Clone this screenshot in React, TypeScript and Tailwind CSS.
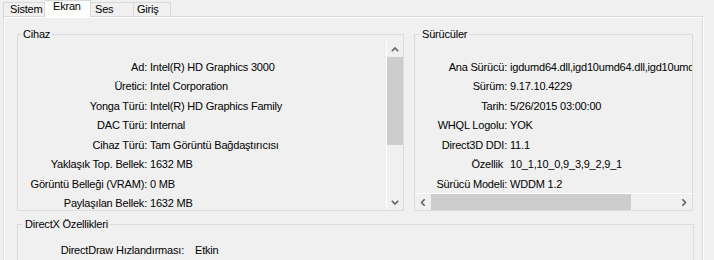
import type { ReactNode } from "react";

const cihaz: [string, string][] = [
  ["Ad:", "Intel(R) HD Graphics 3000"],
  ["Üretici:", "Intel Corporation"],
  ["Yonga Türü:", "Intel(R) HD Graphics Family"],
  ["DAC Türü:", "Internal"],
  ["Cihaz Türü:", "Tam Görüntü Bağdaştırıcısı"],
  ["Yaklaşık Top. Bellek:", "1632 MB"],
  ["Görüntü Belleği (VRAM):", "0 MB"],
  ["Paylaşılan Bellek:", "1632 MB"],
];

const suruculer: [string, string][] = [
  ["Ana Sürücü:", "igdumd64.dll,igd10umd64.dll,igd10umd64.dll"],
  ["Sürüm:", "9.17.10.4229"],
  ["Tarih:", "5/26/2015 03:00:00"],
  ["WHQL Logolu:", "YOK"],
  ["Direct3D DDI:", "11.1"],
  ["Özellik", "10_1,10_0,9_3,9_2,9_1"],
  ["Sürücü Modeli:", "WDDM 1.2"],
];

export default function App() {
  return (
    <div className="h-[260px] w-[714px] overflow-hidden bg-[#f0f0f0] font-['Liberation_Sans',Arial,sans-serif] text-[11px] tracking-[-0.2px] text-black">
      {/* tab strip */}
      <div className="flex h-[16px] items-end pl-[3px]">
        <div className="h-[14px] w-[42px] border-x border-t border-[#d9d9d9] pl-[6px] leading-[12px]">Sistem</div>
        <div className="relative z-10 -mb-px h-[17px] w-[46px] border-r border-t border-[#d9d9d9] bg-white pl-[8px] leading-[11px]">
          Ekran
        </div>
        <div className="h-[14px] w-[43px] border-r border-t border-[#d9d9d9] pl-[4px] leading-[12px]">Ses</div>
        <div className="h-[14px] w-[37px] border-r border-t border-[#d9d9d9] pl-[3px] leading-[12px]">Giriş</div>
      </div>

      {/* tab page */}
      <div className="ml-[3px] h-[244px] w-[701px] border-l border-r border-t border-l-[#d9d9d9] border-r-white border-t-[#d9d9d9] pl-[13px] pt-[17px] shadow-[inset_1px_1px_0_#fff,inset_-1px_0_0_#d9d9d9]">
        <div className="flex gap-[10px]">
          <GroupBox title="Cihaz" className="h-[177px] w-[387px]" legendClass="ml-[3px]">
            <div className="flex min-h-0 flex-1">
              <div className="flex-1 overflow-hidden pt-[17px]">
                {cihaz.map(([k, v]) => (
                  <Row key={k} label={k} value={v} labelClass="w-[129px]" />
                ))}
              </div>
              <div className="flex w-[17px] flex-col border-l border-white">
                <ArrowButton dir="up" />
                <div className="h-[88px] bg-[#cdcdcd]" />
                <div className="flex-1" />
                <ArrowButton dir="down" />
              </div>
            </div>
          </GroupBox>

          <GroupBox title="Sürücüler" className="h-[177px] w-[279px]" legendClass="ml-[5px]">
            <div className="flex min-h-0 flex-1 flex-col">
              <div className="min-h-0 flex-1 overflow-hidden pt-[17px]">
                {suruculer.map(([k, v]) => (
                  <Row key={k} label={k} value={v} labelClass={k.endsWith(":") ? "w-[92px]" : "w-[92px] pr-[4px]"} />
                ))}
              </div>
              <div className="flex h-[17px] border-t border-white">
                <ArrowButton dir="left" />
                <div className="w-[200px] bg-[#cdcdcd]" />
                <div className="flex-1" />
                <ArrowButton dir="right" />
              </div>
            </div>
          </GroupBox>
        </div>

        <GroupBox title="DirectX Özellikleri" className="mt-[13px] h-[60px] w-[677px]" legendClass="ml-[5px]">
          <div className="pt-[10px]">
            <Row label="DirectDraw Hızlandırması:" value="Etkin" labelClass="w-[166px]" valueClass="pl-[11px]" />
          </div>
        </GroupBox>
      </div>
    </div>
  );
}

function GroupBox({
  title,
  className,
  legendClass,
  children,
}: {
  title: string;
  className: string;
  legendClass: string;
  children: ReactNode;
}) {
  return (
    <div className={`flex shrink-0 flex-col border border-[#dcdcdc] ${className}`}>
      <div className={`-mt-[8px] w-fit bg-[#f0f0f0] px-[2px] leading-[14px] ${legendClass}`}>{title}</div>
      {children}
    </div>
  );
}

function Row({
  label,
  value,
  labelClass,
  valueClass = "pl-[3px]",
}: {
  label: string;
  value: string;
  labelClass: string;
  valueClass?: string;
}) {
  return (
    <div className="flex h-[19.43px] items-center whitespace-nowrap leading-[19.43px]">
      <span className={`shrink-0 text-right ${labelClass}`}>{label}</span>
      <span className={valueClass}>{value}</span>
    </div>
  );
}

function ArrowButton({ dir }: { dir: "up" | "down" | "left" | "right" }) {
  const rot =
    dir === "up" ? "rotate-0" : dir === "down" ? "rotate-180" : dir === "left" ? "-rotate-90" : "rotate-90";
  return (
    <div className="flex h-[16px] w-[16px] shrink-0 items-center justify-center">
      <svg width="8" height="5" viewBox="0 0 8 5" className={rot}>
        <path d="M0.8 4.2 L4 1 L7.2 4.2" fill="none" stroke="#606060" strokeWidth="1.6" />
      </svg>
    </div>
  );
}
